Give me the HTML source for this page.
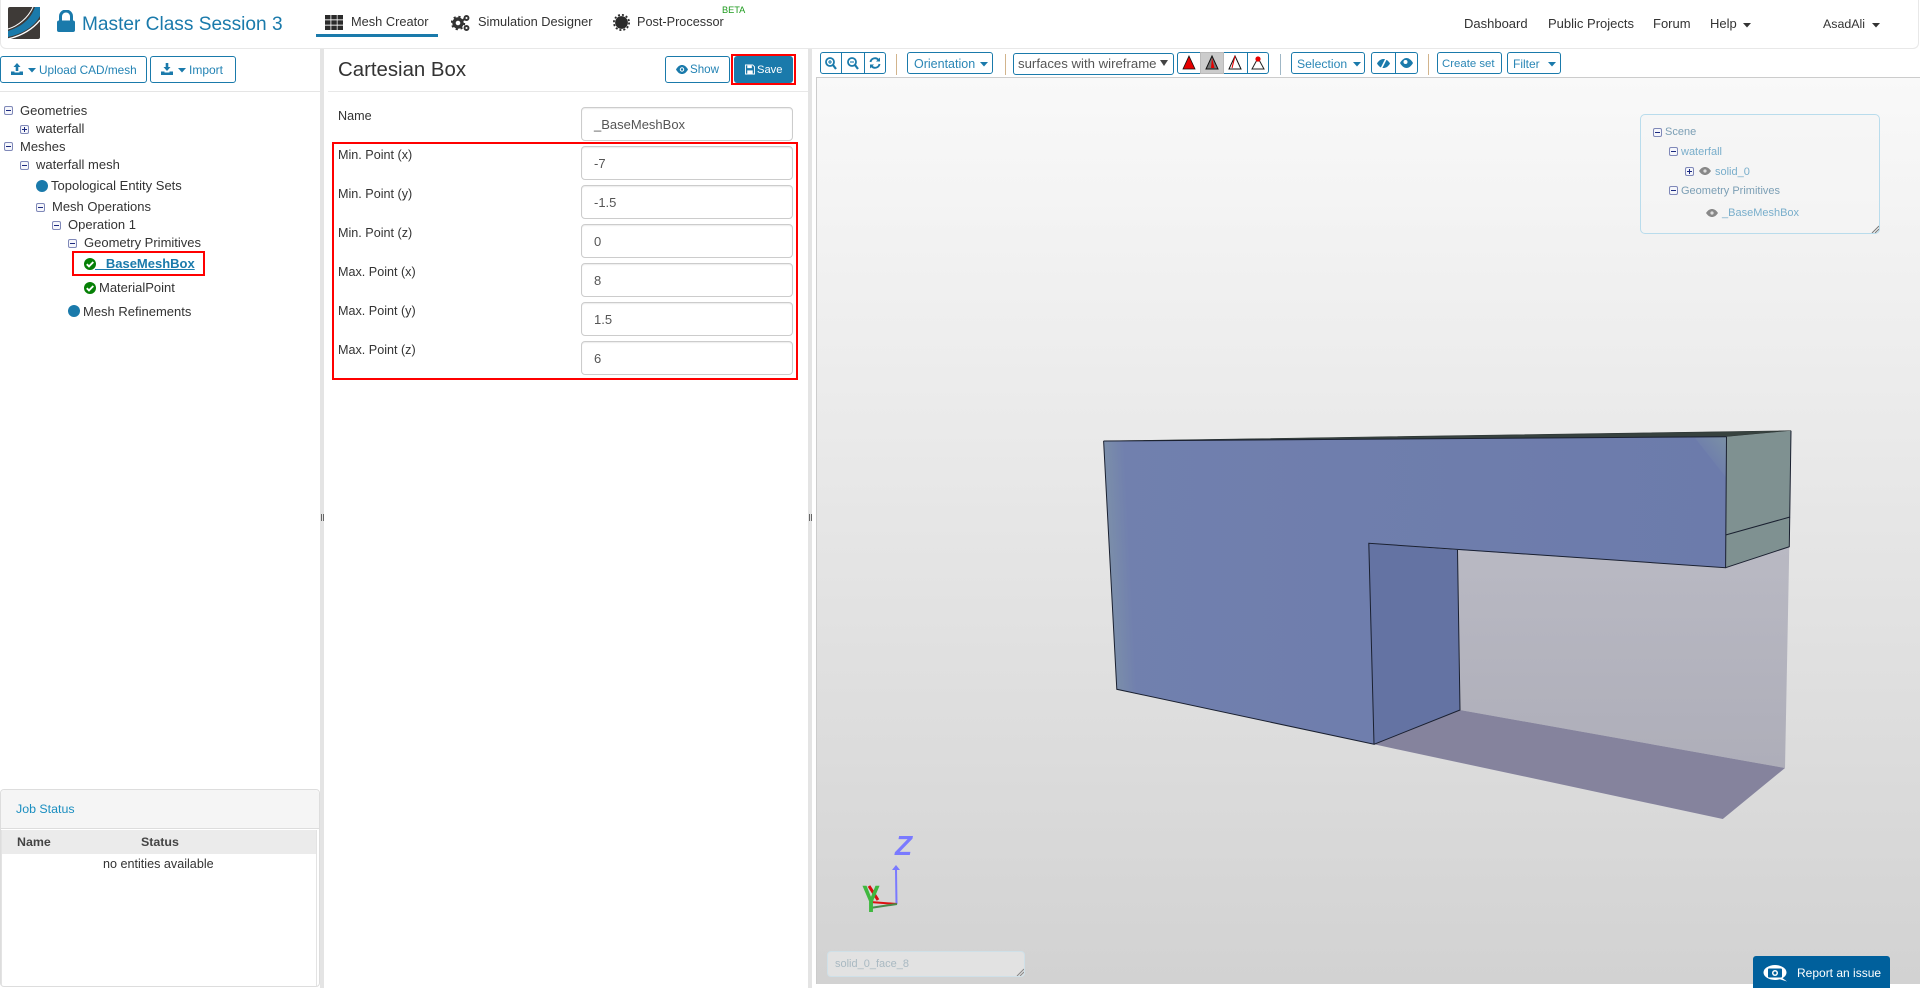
<!DOCTYPE html>
<html><head><meta charset="utf-8"><title>Master Class Session 3</title>
<style>
*{box-sizing:border-box}
html,body{margin:0;padding:0;width:1920px;height:988px;overflow:hidden;background:#fff;font-family:"Liberation Sans",sans-serif;color:#333}
.a{position:absolute}
.t{position:absolute;line-height:20px;height:20px;white-space:pre;font-size:13px}
.nav{font-size:12.8px;color:#333}
.rn{font-size:13px;color:#333}
.btn{position:absolute;border:1px solid #1a7aab;border-radius:3px;background:#fff;color:#2383b4;font-size:12px;white-space:pre}
.lab{font-size:12.6px;left:338px;color:#333}
.inp{position:absolute;left:581px;width:212px;height:34px;border:1px solid #ccc;border-radius:4px;background:#fff;box-shadow:inset 0 1px 1px rgba(0,0,0,.08);font-size:13px;color:#555;line-height:34px;padding-left:12px}
.red{position:absolute;border:2px solid #f00}
.tr{font-size:13px;color:#333}
.bx{position:absolute;width:9px;height:9px;border:1px solid #7f88b8;border-radius:2px;background:#f5f6fb}
.bx:before{content:"";position:absolute;left:1px;right:1px;top:3px;height:1px;background:#1c2a80}
.bx.p:after{content:"";position:absolute;top:1px;bottom:1px;left:3px;width:1px;background:#1c2a80}
.dot{position:absolute;width:12px;height:12px;border-radius:50%;background:#1a7aab}
.sep{position:absolute;width:1px;top:54px;height:21px}
.st{font-size:11px}
</style></head><body>

<!-- viewport -->
<div class="a" style="left:816px;top:77px;width:1104px;height:907px;background:linear-gradient(#f9f9f9,#d2d2d2);border-top:1px solid #ccc;border-left:1px solid #ccc"></div>

<!-- header -->
<div class="a" style="left:0;top:0;width:1919px;height:49px;background:#fff;border:1px solid #e8e8e8;border-top:0;border-radius:0 0 6px 6px"></div>
<svg class="a" style="left:8px;top:7px" width="32" height="32" viewBox="0 0 32 32"><defs><clipPath id="lc"><path d="M2 0H32V30a2 2 0 0 1-2 2H0V2a2 2 0 0 1 2-2z"/></clipPath></defs><g clip-path="url(#lc)"><rect width="32" height="32" fill="#3e3a37"/><path d="M0 24C12 20 22 14 27 0H32V9C26 20 14 27 0 30z" fill="#1a7aab"/><path d="M0 22C10 19 20 11 25 0" fill="none" stroke="#fff" stroke-width="1"/><path d="M0 32C12 29 24 23 32 13" fill="none" stroke="#fff" stroke-width="1.4"/></g></svg>
<svg class="a" style="left:57px;top:10px" width="18" height="22" viewBox="0 0 18 22"><path d="M3.500 11V6.500a5.500 5.500 0 0 1 11 0V11" fill="none" stroke="#1a7aab" stroke-width="3"/><rect x="0" y="10.500" width="18" height="11.500" rx="2" fill="#1a7aab"/></svg>
<div class="t" style="left:82px;top:13px;font-size:19.1px;height:24px;line-height:24px;color:#1a7aab">Master Class Session 3</div>

<svg class="a" style="left:325px;top:15px" width="18" height="15" viewBox="0 0 18 15" fill="#2b2b2b"><rect width="5.500" height="4.400" x="0" y="0"/><rect width="5.500" height="4.400" x="6.300" y="0"/><rect width="5.500" height="4.400" x="12.500" y="0"/><rect width="5.500" height="4.400" x="0" y="5.300"/><rect width="5.500" height="4.400" x="6.300" y="5.300"/><rect width="5.500" height="4.400" x="12.500" y="5.300"/><rect width="5.500" height="4.400" x="0" y="10.600"/><rect width="5.500" height="4.400" x="6.300" y="10.600"/><rect width="5.500" height="4.400" x="12.500" y="10.600"/></svg>
<div class="t nav" style="left:351px;top:12px">Mesh Creator</div>
<div class="a" style="left:316px;top:34px;width:122px;height:3px;background:#1a7aab"></div>
<svg class="a" style="left:451px;top:14px" width="19" height="18" viewBox="0 0 19 18"><circle cx="7" cy="9" r="4" fill="none" stroke="#333" stroke-width="3.400"/><circle cx="7" cy="9" r="6.200" fill="none" stroke="#333" stroke-width="2" stroke-dasharray="2.200 2.700"/><circle cx="15.500" cy="4" r="2" fill="none" stroke="#333" stroke-width="1.900"/><circle cx="15.500" cy="14" r="2" fill="none" stroke="#333" stroke-width="1.900"/></svg>
<div class="t nav" style="left:478px;top:12px">Simulation Designer</div>
<svg class="a" style="left:613px;top:14px" width="17" height="17" viewBox="0 0 17 17"><circle cx="8.500" cy="8.500" r="6.400" fill="#2b2b2b"/><circle cx="8.500" cy="8.500" r="7.600" fill="none" stroke="#2b2b2b" stroke-width="1.800" stroke-dasharray="2 2"/></svg>
<div class="t nav" style="left:637px;top:12px;font-size:12.7px">Post-Processor</div>
<div class="t" style="left:722px;top:0;font-size:9.2px;color:#1c9a1c">BETA</div>

<div class="t rn" style="left:1464px;top:14px">Dashboard</div>
<div class="t rn" style="left:1548px;top:14px">Public Projects</div>
<div class="t rn" style="left:1653px;top:14px">Forum</div>
<div class="t rn" style="left:1710px;top:14px">Help</div>
<svg class="a" style="left:1743px;top:23px" width="8" height="5"><path d="M0 0H8L4 4.500z" fill="#333"/></svg>
<div class="t rn" style="left:1823px;top:14px;font-size:12.400px">AsadAli</div>
<svg class="a" style="left:1872px;top:23px" width="8" height="5"><path d="M0 0H8L4 4.500z" fill="#333"/></svg>

<!-- splitters -->
<div class="a" style="left:320px;top:49px;width:4px;height:939px;background:#e4e4e4"></div>
<div class="a" style="left:808px;top:49px;width:4px;height:939px;background:#e4e4e4"></div>
<div class="a" style="left:321px;top:514px;width:3px;height:7px;border-left:1px solid #666;border-right:1px solid #666"></div>
<div class="a" style="left:809px;top:514px;width:3px;height:7px;border-left:1px solid #666;border-right:1px solid #666"></div>

<!-- left panel buttons -->
<div class="btn" style="left:0;top:56px;width:147px;height:27px"></div>
<svg class="a" style="left:11px;top:63px" width="12" height="12" viewBox="0 0 12 12" fill="#1a7aab"><path d="M6 0L9.500 4H7.300V8H4.700V4H2.500z"/><path d="M0 8.500H3.500V9.500H8.500V8.500H12V12H0z"/></svg>
<svg class="a" style="left:28px;top:68px" width="8" height="5"><path d="M0 0H8L4 4.500z" fill="#1a7aab"/></svg>
<div class="t" style="left:39px;top:60px;font-size:11.8px;color:#2383b4">Upload CAD/mesh</div>
<div class="btn" style="left:150px;top:56px;width:86px;height:27px"></div>
<svg class="a" style="left:161px;top:63px" width="12" height="12" viewBox="0 0 12 12" fill="#1a7aab"><path d="M4.700 0H7.300V4H9.500L6 8L2.500 4H4.700z"/><path d="M0 8.500H3.500V9.500H8.500V8.500H12V12H0z"/></svg>
<svg class="a" style="left:178px;top:68px" width="8" height="5"><path d="M0 0H8L4 4.500z" fill="#1a7aab"/></svg>
<div class="t" style="left:189px;top:60px;font-size:12px;color:#2383b4">Import</div>
<div class="a" style="left:0;top:91px;width:320px;height:1px;background:#e5e5e5"></div>

<!-- tree -->
<div class="bx" style="left:4px;top:106px"></div><div class="t tr" style="left:20px;top:101px">Geometries</div>
<div class="bx p" style="left:20px;top:125px"></div><div class="t tr" style="left:36px;top:119px">waterfall</div>
<div class="bx" style="left:4px;top:142px"></div><div class="t tr" style="left:20px;top:137px">Meshes</div>
<div class="bx" style="left:20px;top:161px"></div><div class="t tr" style="left:36px;top:155px">waterfall mesh</div>
<div class="dot" style="left:36px;top:180px"></div><div class="t tr" style="left:51px;top:176px">Topological Entity Sets</div>
<div class="bx" style="left:36px;top:203px"></div><div class="t tr" style="left:52px;top:197px">Mesh Operations</div>
<div class="bx" style="left:52px;top:221px"></div><div class="t tr" style="left:68px;top:215px">Operation 1</div>
<div class="bx" style="left:68px;top:239px"></div><div class="t tr" style="left:84px;top:233px">Geometry Primitives</div>
<svg class="a" style="left:84px;top:258px" width="12" height="12" viewBox="0 0 12 12"><circle cx="6" cy="6" r="6" fill="#068006"/><path d="M2.800 6.200L5 8.400L9.300 4" fill="none" stroke="#fff" stroke-width="1.900"/></svg>
<div class="t tr" style="left:95px;top:254px;font-weight:bold;color:#1a7aab;text-decoration:underline"> _BaseMeshBox</div>
<div class="red" style="left:72px;top:251px;width:133px;height:25px"></div>
<svg class="a" style="left:84px;top:282px" width="12" height="12" viewBox="0 0 12 12"><circle cx="6" cy="6" r="6" fill="#068006"/><path d="M2.800 6.200L5 8.400L9.300 4" fill="none" stroke="#fff" stroke-width="1.900"/></svg>
<div class="t tr" style="left:99px;top:278px">MaterialPoint</div>
<div class="dot" style="left:68px;top:305px"></div><div class="t tr" style="left:83px;top:302px">Mesh Refinements</div>

<!-- job status -->
<div class="a" style="left:0;top:789px;width:320px;height:198px;border:1px solid #ddd;border-radius:4px;background:#fff"></div>
<div class="a" style="left:1px;top:790px;width:318px;height:39px;background:#f5f5f5;border-bottom:1px solid #ddd;border-radius:4px 4px 0 0"></div>
<div class="t" style="left:16px;top:799px;font-size:12.4px;color:#1a8ec0">Job Status</div>
<div class="a" style="left:2px;top:830px;width:315px;height:24px;background:#ebebeb"></div>
<div class="a" style="left:316px;top:830px;width:1px;height:156px;background:#e3e3e3"></div>
<div class="a" style="left:1px;top:830px;width:1px;height:156px;background:#e3e3e3"></div>
<div class="t" style="left:17px;top:832px;font-size:12.4px;font-weight:bold;color:#444">Name</div>
<div class="t" style="left:141px;top:832px;font-size:12.4px;font-weight:bold;color:#444">Status</div>
<div class="t" style="left:103px;top:854px;font-size:12.6px;color:#333">no entities available</div>

<!-- middle panel -->
<div class="t" style="left:338px;top:55px;height:30px;line-height:30px;font-size:20.4px;color:#333">Cartesian Box</div>
<div class="btn" style="left:665px;top:56px;width:65px;height:27px"></div>
<svg class="a" style="left:676px;top:65px" width="12" height="9" viewBox="0 0 12 9"><path d="M0 4.500C2 1 4 0 6 0s4 1 6 4.500C10 8 8 9 6 9S2 8 0 4.500z" fill="#1a7aab"/><circle cx="6" cy="4.500" r="2.200" fill="#fff"/><circle cx="6" cy="4.500" r="1.200" fill="#1a7aab"/></svg>
<div class="t" style="left:690px;top:60px;font-size:11.6px;color:#2383b4">Show</div>
<div class="a" style="left:734px;top:56px;width:59px;height:27px;background:#1a7aab;border-radius:3px"></div>
<svg class="a" style="left:745px;top:64px" width="10" height="11" viewBox="0 0 11 11"><path d="M0.500 0.500H8.500L10.500 2.500V10.500H0.500z" fill="none" stroke="#fff"/><rect x="2.500" y="1" width="5" height="3" fill="#fff"/><rect x="2.500" y="6.500" width="6" height="4" fill="#fff"/></svg>
<div class="t" style="left:757px;top:60px;font-size:11.2px;color:#fff">Save</div>
<div class="red" style="left:731px;top:54px;width:65px;height:31px"></div>
<div class="a" style="left:328px;top:91px;width:480px;height:1px;background:#e8e8e8"></div>

<div class="t lab" style="top:106px">Name</div><div class="inp" style="top:107px">_BaseMeshBox</div>
<div class="t lab" style="top:145px">Min. Point (x)</div><div class="inp" style="top:146px">-7</div>
<div class="t lab" style="top:184px">Min. Point (y)</div><div class="inp" style="top:185px">-1.5</div>
<div class="t lab" style="top:223px">Min. Point (z)</div><div class="inp" style="top:224px">0</div>
<div class="t lab" style="top:262px">Max. Point (x)</div><div class="inp" style="top:263px">8</div>
<div class="t lab" style="top:301px">Max. Point (y)</div><div class="inp" style="top:302px">1.5</div>
<div class="t lab" style="top:340px">Max. Point (z)</div><div class="inp" style="top:341px">6</div>
<div class="red" style="left:332px;top:142px;width:466px;height:238px"></div>

<!-- toolbar -->
<div class="btn" style="left:820px;top:52px;width:66px;height:22px"></div>
<div class="a" style="left:841px;top:52px;width:1px;height:22px;background:#1a7aab"></div>
<div class="a" style="left:864px;top:52px;width:1px;height:22px;background:#1a7aab"></div>
<svg class="a" style="left:825px;top:57px" width="12" height="13" viewBox="0 0 12 13" fill="none" stroke="#1a7aab"><circle cx="5" cy="5" r="4" stroke-width="1.800"/><path d="M8 8L11 12" stroke-width="2.200"/><path d="M3 5H7M5 3V7" stroke-width="1.100"/></svg>
<svg class="a" style="left:847px;top:57px" width="12" height="13" viewBox="0 0 12 13" fill="none" stroke="#1a7aab"><circle cx="5" cy="5" r="4" stroke-width="1.800"/><path d="M8 8L11 12" stroke-width="2.200"/><path d="M3 5H7" stroke-width="1.100"/></svg>
<svg class="a" style="left:869px;top:57px" width="12" height="12" viewBox="0 0 12 12" fill="none" stroke="#1a7aab" stroke-width="1.900"><path d="M1.500 5A4.500 4.500 0 0 1 9.500 3"/><path d="M10.500 7A4.500 4.500 0 0 1 2.500 9"/><path d="M11 0.500V4.500H7z" fill="#1a7aab" stroke="none"/><path d="M1 11.500V7.500H5z" fill="#1a7aab" stroke="none"/></svg>
<div class="sep" style="left:896px;background:#d2b48c"></div>
<div class="btn" style="left:907px;top:52px;width:86px;height:22px"></div>
<div class="t" style="left:914px;top:54px;font-size:12.5px;color:#2a86b5">Orientation</div>
<svg class="a" style="left:980px;top:62px" width="8" height="5"><path d="M0 0H8L4 4.500z" fill="#1a7aab"/></svg>
<div class="sep" style="left:1005px;background:#d2b48c"></div>
<div class="btn" style="left:1013px;top:53px;width:161px;height:22px"></div>
<div class="t" style="left:1018px;top:54px;font-size:13.2px;color:#555">surfaces with wireframe</div>
<svg class="a" style="left:1160px;top:60px" width="8" height="7"><path d="M0 0H8L4 6z" fill="#444"/></svg>
<div class="btn" style="left:1177px;top:52px;width:92px;height:22px"></div>
<div class="a" style="left:1200px;top:52px;width:24px;height:22px;background:#ccc;border:1px solid #bbb"></div>
<div class="a" style="left:1247px;top:52px;width:1px;height:22px;background:#1a7aab"></div>
<svg class="a" style="left:1182px;top:55px" width="14" height="16" viewBox="0 0 14 16"><path d="M7 1L13 14L1 14z" fill="#e60000" stroke="#111" stroke-width=".8"/></svg>
<svg class="a" style="left:1205px;top:55px" width="14" height="16" viewBox="0 0 14 16"><path d="M7 1L13 14L1 14z" fill="#777" stroke="#111"/><path d="M7 3L9.500 13L6 13z" fill="#e60000"/></svg>
<svg class="a" style="left:1228px;top:55px" width="14" height="16" viewBox="0 0 14 16"><path d="M7 1L13 14L1 14z" fill="#fff" stroke="#111"/><path d="M7 1L4 13" stroke="#e60000" stroke-width="1" fill="none"/></svg>
<svg class="a" style="left:1251px;top:55px" width="14" height="16" viewBox="0 0 14 16"><path d="M7 3L13 14L1 14z" fill="#fff" stroke="#222"/><circle cx="7" cy="4" r="2.600" fill="#e60000"/></svg>
<div class="sep" style="left:1280px;background:#9fb7c6"></div>
<div class="btn" style="left:1291px;top:52px;width:74px;height:22px"></div>
<div class="t" style="left:1297px;top:54px;font-size:12.2px;color:#2a86b5">Selection</div>
<svg class="a" style="left:1353px;top:62px" width="8" height="5"><path d="M0 0H8L4 4.500z" fill="#1a7aab"/></svg>
<div class="btn" style="left:1371px;top:52px;width:47px;height:22px"></div>
<div class="a" style="left:1395px;top:52px;width:1px;height:22px;background:#1a7aab"></div>
<svg class="a" style="left:1377px;top:58px" width="13" height="11" viewBox="0 0 13 11"><path d="M0 5.500C2 2 4.500 1 6.500 1s4.500 1 6.500 4.500C11 9 8.500 10 6.500 10S2 9 0 5.500z" fill="#1a7aab"/><path d="M9.500 0L4 11" stroke="#fff" stroke-width="1.600"/></svg>
<svg class="a" style="left:1400px;top:58px" width="13" height="10" viewBox="0 0 13 10"><path d="M0 5C2 1.500 4.500 0 6.500 0s4.500 1.500 6.500 5C11 8.500 8.500 10 6.500 10S2 8.500 0 5z" fill="#1a7aab"/><circle cx="5.500" cy="4" r="2" fill="#fff"/></svg>
<div class="sep" style="left:1428px;background:#d2b48c"></div>
<div class="btn" style="left:1437px;top:52px;width:65px;height:22px"></div>
<div class="t" style="left:1442px;top:54px;font-size:11.4px;color:#2a86b5">Create set</div>
<div class="btn" style="left:1507px;top:52px;width:54px;height:22px"></div>
<div class="t" style="left:1513px;top:54px;font-size:12px;color:#2a86b5">Filter</div>
<svg class="a" style="left:1548px;top:62px" width="8" height="5"><path d="M0 0H8L4 4.500z" fill="#1a7aab"/></svg>

<!-- scene panel -->
<div class="a" style="left:1640px;top:114px;width:240px;height:120px;border:1px solid #b9dcec;border-radius:5px;background:rgba(245,245,245,.6)"></div>
<div class="bx" style="left:1653px;top:128px"></div><div class="t st" style="left:1665px;top:122px;color:#7c9fb5">Scene</div>
<div class="bx" style="left:1669px;top:147px"></div><div class="t st" style="left:1681px;top:142px;color:#79aecb">waterfall</div>
<div class="bx p" style="left:1685px;top:167px"></div>
<svg class="a" style="left:1699px;top:167px" width="12" height="8" viewBox="0 0 12 8"><path d="M0 4C2 1 4 0 6 0s4 1 6 4C10 7 8 8 6 8S2 7 0 4z" fill="#888"/><circle cx="6" cy="4" r="1.600" fill="#ddd"/></svg>
<div class="t st" style="left:1715px;top:162px;color:#79aecb">solid_0</div>
<div class="bx" style="left:1669px;top:186px"></div><div class="t st" style="left:1681px;top:181px;color:#7c9fb5">Geometry Primitives</div>
<svg class="a" style="left:1706px;top:209px" width="12" height="8" viewBox="0 0 12 8"><path d="M0 4C2 1 4 0 6 0s4 1 6 4C10 7 8 8 6 8S2 7 0 4z" fill="#888"/><circle cx="6" cy="4" r="1.600" fill="#ddd"/></svg>
<div class="t st" style="left:1722px;top:203px;color:#79aecb">_BaseMeshBox</div>
<svg class="a" style="left:1871px;top:225px" width="8" height="8"><path d="M1 8L8 1M4 8L8 4" stroke="#777" fill="none"/></svg>

<!-- 3D model -->
<svg class="a" style="left:1080px;top:420px" width="740" height="420" viewBox="1080 420 740 420">
<defs>
<linearGradient id="wall" x1="0" y1="0" x2="0" y2="1"><stop offset="0" stop-color="#b9b9c3"/><stop offset="1" stop-color="#aeaeb9"/></linearGradient>
<linearGradient id="lefts" gradientUnits="userSpaceOnUse" x1="1104" y1="441" x2="1124" y2="440"><stop offset="0" stop-color="#7b8eaa"/><stop offset="1" stop-color="#7180ae"/></linearGradient>
<linearGradient id="cor" gradientUnits="userSpaceOnUse" x1="1726" y1="440" x2="1705" y2="458"><stop offset="0" stop-color="#7a8fa6"/><stop offset="1" stop-color="#6e7dac"/></linearGradient>
<linearGradient id="main" x1="0" y1="0" x2="1" y2="0"><stop offset="0" stop-color="#7180ae"/><stop offset="1" stop-color="#6c7bab"/></linearGradient>
</defs>
<polygon points="1457.500,550 1725.600,567.700 1789.300,546.700 1785,768 1460,710" fill="url(#wall)"/>
<polygon points="1460,710 1785,768 1722.800,819 1374,744.300" fill="#85839d"/>
<polygon points="1103.600,441 1726.500,436.700 1791,430.700" fill="#37423f" stroke="#2d3535" stroke-width=".6"/>
<polygon points="1726.500,436.700 1791,430.700 1789.300,546.700 1725.600,567.700" fill="#7f9191"/>
<polygon points="1103.600,441 1726.500,436.700 1725.600,567.700 1457.500,550 1368.800,543.300 1374,744.300 1116.800,689.300" fill="url(#main)"/>
<polygon points="1103.600,441 1124,441 1137,694 1116.800,689.300" fill="url(#lefts)"/>
<polygon points="1368.800,543.300 1457.500,550 1460,710 1374,744.300" fill="#6473a3"/>
<polygon points="1695,438 1726.500,436.700 1726.500,478" fill="url(#cor)"/>
<g fill="none" stroke="#1a2030" stroke-width="1">
<path d="M1103.600 441L1116.800 689.300L1374 744.300L1368.800 543.300L1725.600 567.700L1726.500 436.700"/>
<path d="M1374 744.300L1460 710L1457.500 550"/>
<path d="M1725.600 535L1790 517"/>
<path d="M1725.600 567.700L1789.300 546.700L1791 430.700"/>
<path d="M1103.600 441L1726.500 436.700"/>
</g>
</svg>

<!-- axes -->
<svg class="a" style="left:850px;top:825px" width="80" height="100" viewBox="850 825 80 100">
<text x="895" y="855" font-family="Liberation Sans" font-size="28" font-weight="bold" font-style="italic" fill="#7a7aff">Z</text>
<path d="M896.500 904L896 870" stroke="#7a7aff" stroke-width="2" fill="none"/>
<path d="M896 865L892 870H900z" fill="#7a7aff"/>
<path d="M897 904L870 902" stroke="#d11" stroke-width="2" fill="none"/>
<path d="M869 886L878 900M871 902L872 900" stroke="#d80f0f" stroke-width="3" fill="none"/>
<path d="M897 904L870 908" stroke="#4a8a4a" stroke-width="2" fill="none"/>
<text transform="translate(862,912) scale(1,1.400)" font-family="Liberation Sans" font-size="27" font-weight="bold" fill="#3fb83f">Y</text>
</svg>

<!-- name box -->
<div class="a" style="left:827px;top:951px;width:198px;height:26px;background:#e2e2e2;border:1px solid #cfe0e8;border-radius:4px"></div>
<div class="t st" style="left:835px;top:954px;color:#a9b9c2">solid_0_face_8</div>
<svg class="a" style="left:1016px;top:968px" width="8" height="8"><path d="M1 8L8 1M4 8L8 4" stroke="#888" fill="none"/></svg>

<!-- report -->
<div class="a" style="left:812px;top:984px;width:1108px;height:4px;background:#fff"></div>
<div class="a" style="left:1753px;top:956px;width:137px;height:32px;background:#00609c;border-radius:3px 3px 0 0"></div>
<svg class="a" style="left:1763px;top:965px" width="25" height="17" viewBox="0 0 25 17"><ellipse cx="12" cy="7.500" rx="11.500" ry="7.500" fill="#fff"/><path d="M18 12L24 16.500L16 14z" fill="#fff"/><rect x="5" y="3.500" width="14" height="9" rx="1" fill="#00609c"/><circle cx="12" cy="8" r="3" fill="#fff"/><circle cx="12" cy="8" r="1.500" fill="#00609c"/></svg>
<div class="t" style="left:1797px;top:963px;font-size:12px;color:#fff">Report an issue</div>

</body></html>
